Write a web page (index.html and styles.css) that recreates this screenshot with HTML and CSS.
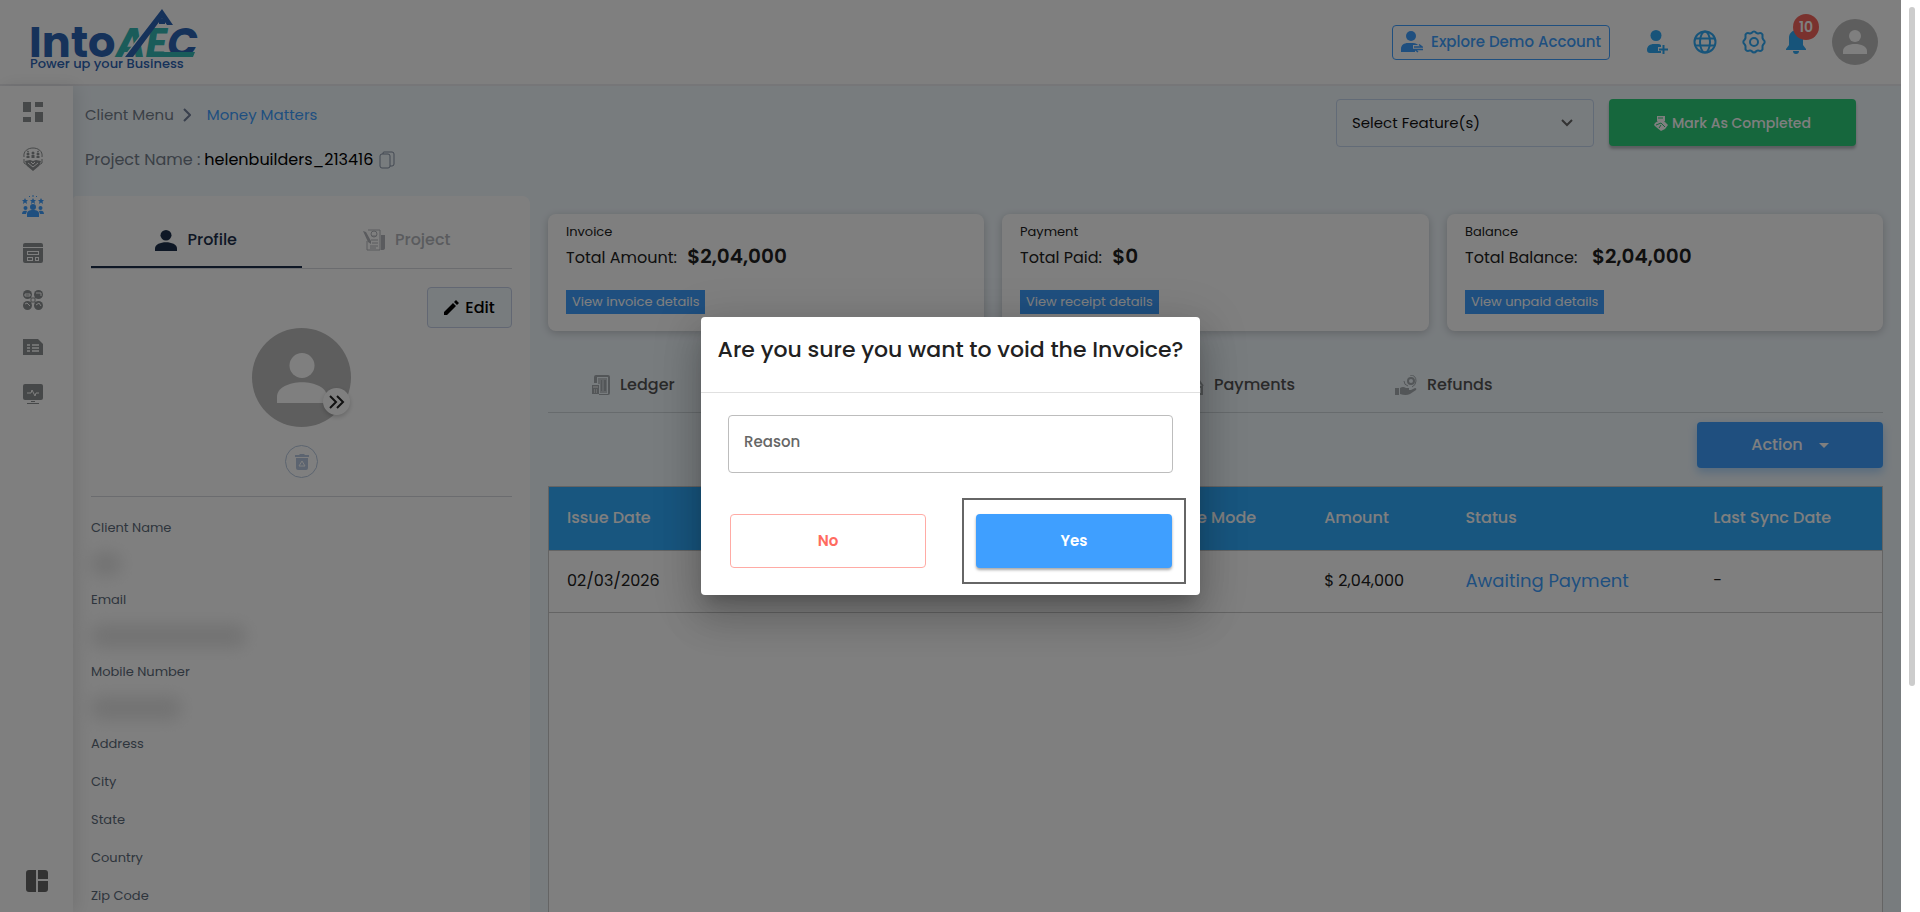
FILE: index.html
```html
<!DOCTYPE html>
<html lang="en">
<head>
<meta charset="utf-8">
<meta name="viewport" content="width=device-width, initial-scale=1">
<title>IntoAEC - Money Matters</title>
<link rel="stylesheet" href="styles.css">
</head>
<body>
<svg width="0" height="0" class="sprite" aria-hidden="true">
  <symbol id="person" viewBox="0 0 24 24"><circle cx="12" cy="6" r="6"/><path d="M0 24v-3c0-4.500 6-7 12-7s12 2.500 12 7v3z"/></symbol>
</svg>
<div class="app">
  <div class="page">
    <header class="topbar">
      <a class="logo" href="#" aria-label="IntoAEC home">
        <svg width="172" height="66" viewBox="-2 0 172 66">
          <text class="logo-word" y="50"><tspan class="navy" x="-1" font-size="43">Into</tspan><tspan class="teal" font-size="40" font-style="italic" x="86">AE</tspan><tspan class="navy" font-size="40" font-style="italic">C</tspan></text>
          <path class="teal" d="M119 45h46l-2 5h-46z"/>
          <path d="M93 52 127 8" stroke="#fff" stroke-width="2"/>
          <path class="navy" d="M95 50 132 2l11 16h-6l-5-7-29 39z"/>
          <path class="navy" d="M129 13l3-2 3 2v4h-6z"/>
          <text class="navy tag" x="0" y="61" font-size="13">Power up your Business</text>
        </svg>
      </a>
      <div class="topbar-tools">
        <button class="demo" type="button">
          <svg width="22" height="22" viewBox="0 0 22 22"><circle cx="10" cy="5" r="5"/><path d="M0 21v-3c0-4 3-6 7-6h5c3 0 4 1 5 2h-5v4h2v3z"/><path d="M13 16h8l-3-2.500M22 18.500h-8l3 2.500" fill="none" stroke="currentColor" stroke-width="1.500"/></svg>
          Explore Demo Account
        </button>
        <button class="tool" type="button" aria-label="Add user"><svg width="22" height="24" viewBox="0 0 22 24"><circle cx="9" cy="5.500" r="5.500"/><path d="M3 23q-3 0-3-3c0-4 3-6 7-6h4q2 0 3 1v2h-3v4h3v2z"/><path d="M16.500 15v9M12 19.500h9" class="line-2"/></svg></button>
        <button class="tool" type="button" aria-label="Language"><svg width="24" height="24" viewBox="0 0 24 24"><g class="line-2"><circle cx="12" cy="12" r="10.500"/><ellipse cx="12" cy="12" rx="5" ry="10.500"/><path d="M2 8.500h20M2 15.500h20"/></g></svg></button>
        <button class="tool wide" type="button" aria-label="Settings"><svg width="24" height="24" viewBox="0 0 24 24"><g class="line-2"><path d="M9.500 3q2.500-3 5 0l1.500.6q3-1.600 4.500.9L20.500 8l.7 1.500q3 2.500 0 5l-.7 1.500v3.500q-1.500 2.500-4.500.9l-1.500.6q-2.500 3-5 0L8 20.400q-3 1.600-4.500-.9V16l-.7-1.500q-3-2.500 0-5L3.500 8V4.500Q5 2 8 3.600z" stroke-linejoin="round"/><circle cx="12" cy="12" r="4"/></g></svg></button>
        <button class="tool bell" type="button" aria-label="Notifications, 10 unread"><svg width="20" height="24" viewBox="0 0 20 24"><path d="M10 0c5 1 7 4 7 8v7l3 4v1H0v-1l3-4V8c0-4 2-7 7-8zM7 21h6a3 3 0 0 1-6 0z"/></svg><span class="badge">10</span></button>
        <button class="avatar" type="button" aria-label="Account"><svg width="24" height="24" aria-hidden="true"><use href="#person"/></svg></button>
      </div>
    </header>

    <div class="body">
      <nav class="rail" aria-label="Main">
        <a href="#" aria-label="Dashboard"><svg width="20" height="20" viewBox="0 0 20 20"><path d="M0 0h8v10H0zM12 0h8v5h-8zM0 15h8v5H0zM12 10h8v10h-8z"/></svg></a>
        <a href="#" aria-label="Partners"><svg width="20" height="24" viewBox="0 0 20 24"><g class="line-1"><path d="M1 10C0 4 5 1 10 1s10 3 9 9M4 4l2 1M16 4l-2 1M1 12v4l3 2M19 12v4l-3 2"/></g><circle cx="5" cy="7" r="1.500"/><circle cx="10" cy="6" r="1.500"/><circle cx="15" cy="7" r="1.500"/><path d="M3.500 11V9h3v2zM8.500 11V8h3v3zM13.500 11V9h3v2zM2 14l5-1 3 1 3-1 5 1-2 5-6 5-6-5z"/><path d="M5 16l5 4 5-4M8 15l2 2 2-2" stroke="#fff" fill="none"/></svg></a>
        <a href="#" class="active" aria-label="Clients"><svg width="22" height="22" viewBox="0 0 22 22"><circle cx="11" cy="12" r="3"/><path d="M5 22v-3c0-3 2-4 6-4s6 1 6 4v3z"/><circle cx="3.500" cy="13" r="2"/><circle cx="18.500" cy="13" r="2"/><path d="M0 19c0-3 2-4 5-3l-1 3zM22 19c0-3-2-4-5-3l1 3z"/><path d="M3 3l1 2h2L4.500 6.500 5 9 3 7.500 1 9l.5-2.500L0 5h2zM11 3l1 2h2l-1.500 1.500.5 2.500-2-1.500L9 9l.5-2.500L8 5h2zM19 3l1 2h2l-1.500 1.500.5 2.500-2-1.500L17 9l.5-2.500L16 5h2z"/><path d="M11 0v2M7 1l1 1M15 1l-1 1" class="line-1"/></svg></a>
        <a href="#" aria-label="Pages"><svg width="20" height="20" viewBox="0 0 20 20"><path fill-rule="evenodd" d="M2 0h16q2 0 2 2v2H0V2q0-2 2-2zM0 5h20v13q0 2-2 2H2q-2 0-2-2zM4 8v4h12V8zM4 14v4h6v-4zM12 14v4h4v-4z"/><path d="M5 9h10v2H5zM5 15h4v2H5zM13 15h2v2h-2z"/></svg></a>
        <a href="#" aria-label="Workflow"><svg width="20" height="20" viewBox="0 0 20 20"><circle cx="4.500" cy="4.500" r="4.500"/><circle cx="15.500" cy="4.500" r="4.500"/><circle cx="4.500" cy="15.500" r="4.500"/><circle cx="15.500" cy="15.500" r="4.500"/><path d="M2 6V4h5v2zM13 3h5v3M2 14l2-1 3 3M13 15l3-2 2 3" stroke="#fff" fill="none"/><path d="M8 8h4v4H8zM7 7l1 1M13 7l-1 1M7 13l1-1M13 13l-1-1" class="line-1"/></svg></a>
        <a href="#" aria-label="Reports"><svg width="20" height="16" viewBox="0 0 20 16"><path d="M0 0h15l5 5v11H0z"/><path d="M4 6h3M9 6h7M4 9h3M9 9h7M4 12h3M9 12h7" stroke="#fff" stroke-width="1.500"/></svg></a>
        <a href="#" aria-label="Activity"><svg width="20" height="20" viewBox="0 0 20 20"><rect width="20" height="16" rx="2"/><path d="M8 17h4v1H8zM4 19h12v1H4z"/><path d="M4 9h4l1-3 3 6 1-3h3" stroke="#fff" fill="none"/></svg></a>
        <button class="rail-toggle" type="button" aria-label="Toggle layout"><svg width="22" height="22" viewBox="0 0 22 22"><path d="M3 0h7v22H3q-3 0-3-3V3q0-3 3-3zM12 0h7q3 0 3 3v6H12zM12 11h10v8q0 3-3 3h-7z"/></svg></button>
      </nav>

      <main class="content">
        <div class="heading">
          <div>
            <nav class="crumbs" aria-label="Breadcrumb">
              <a href="#" class="muted">Client Menu</a>
              <svg width="8" height="14" viewBox="0 0 8 14"><path d="M1 1l6 6-6 6" fill="none" stroke="#72809a" stroke-width="2"/></svg>
              <a href="#" class="current">Money Matters</a>
            </nav>
            <p class="project"><span class="muted">Project Name :</span> helenbuilders_213416
              <button class="plain" type="button" aria-label="Copy project name"><svg width="16" height="18" viewBox="0 0 16 18"><g fill="none" stroke="#8490a4"><rect x="1" y="3" width="10" height="14" rx="2"/><path d="M4 3V2q0-1 1-1h8q2 0 2 2v10q0 2-2 2h-2"/></g></svg></button>
            </p>
          </div>
          <div class="heading-tools">
            <select aria-label="Select features"><option>Select Feature(s)</option></select>
            <button class="complete" type="button"><svg width="14" height="16" viewBox="0 0 14 16"><path d="M3 1h8v5H3zM1 8l3-2h6l4 4-3 4-4 2-5-4-2-2z"/><path d="M4 3h5M2 10l5-2 4 4M5 13l2-3" stroke="#2dce7a" fill="none"/></svg>Mark As Completed</button>
          </div>
        </div>

        <div class="columns">
          <section class="profile">
            <div class="tabs" role="tablist">
              <button type="button" role="tab" aria-selected="true"><svg width="22" height="21" viewBox="0 0 24 24" preserveAspectRatio="none"><use href="#person"/></svg>Profile</button>
              <button type="button" role="tab" aria-selected="false"><svg width="22" height="22" viewBox="0 0 22 22"><path d="M5 1h12v20H4v-9" fill="none" stroke="currentColor"/><path d="M18 6h4v13q0 2-3 2h-1zM0 2l3 1 5 9v3l-3-2z"/><circle cx="11" cy="5" r="3" fill="none" stroke="currentColor"/><path d="M9 7h4M8 11h7M9 14h6M7 17h8M7 19h6" stroke="currentColor"/></svg>Project</button>
            </div>
            <button class="edit" type="button"><svg width="15" height="15" viewBox="0 0 15 15"><path d="M0 15v-3l9-9 3 3-9 9zM10 2l2-2 3 3-2 2z"/></svg>Edit</button>
            <div class="photo">
              <svg width="50" height="50" aria-hidden="true"><use href="#person"/></svg>
              <button class="photo-more" type="button" aria-label="More"><svg width="16" height="14" viewBox="0 0 16 14"><path d="M1 1l6 6-6 6M8 1l6 6-6 6" fill="none" stroke="#222" stroke-width="2"/></svg></button>
            </div>
            <button class="trash" type="button" aria-label="Delete photo"><svg width="14" height="16" viewBox="0 0 14 16"><path d="M0 1h4l1-1h4l1 1h4v2H0zM1 4h12v10q0 2-2 2H3q-2 0-2-2z"/><path d="M7 7l3 5H4z" fill="none" stroke="#fff"/></svg></button>
            <dl>
              <dt>Client Name</dt><dd class="short"></dd>
              <dt>Email</dt><dd class="long"></dd>
              <dt>Mobile Number</dt><dd class="medium"></dd>
              <dt>Address</dt><dt>City</dt><dt>State</dt><dt>Country</dt><dt>Zip Code</dt>
            </dl>
          </section>

          <section class="finance">
            <div class="cards">
              <article><h2>Invoice</h2><p>Total Amount: <strong>$2,04,000</strong></p><a href="#">View invoice details</a></article>
              <article><h2>Payment</h2><p>Total Paid: <strong>$0</strong></p><a href="#">View receipt details</a></article>
              <article><h2>Balance</h2><p>Total Balance:&nbsp; <strong>$2,04,000</strong></p><a href="#">View unpaid details</a></article>
            </div>
            <div class="ledger-tabs" role="tablist">
              <button type="button" role="tab"><svg width="18" height="20" viewBox="0 0 18 20"><path fill-rule="evenodd" d="M4 0h12q2 0 2 2v16q0 2-2 2H7v-1h9V2H5v6H2V2q0-2 2-2z"/><path d="M6 3h9v15H8V9H6z" opacity=".6"/><path d="M9 5h1v11H9zM12 5h2v11h-2zM0 10h7v9H0z"/><path d="M1 12h5M2 15h1M4 15h1M2 17h1M4 17h1" stroke="#fff"/></svg>Ledger</button>
              <button type="button" role="tab"><svg width="20" height="20" viewBox="0 0 20 20"><path d="M10 2q4 0 6 5l3 4M2 12h16v7H2z" fill="none" stroke="currentColor" stroke-width="2"/></svg>Payments</button>
              <button type="button" role="tab"><svg width="22" height="20" viewBox="0 0 22 20"><circle cx="16" cy="6" r="3" fill="none" stroke="currentColor" stroke-width="2"/><path d="M15 0q6 0 6 6 0 4-4 6M13 11q-4-1-4-5" fill="none" stroke="currentColor"/><path d="M0 13h4v7H0zM5 13q3-2 6 0h3v2h2l4-2q2 0 1 2l-6 4q-4 2-10 0z"/></svg>Refunds</button>
            </div>
            <button class="action" type="button">Action<svg width="10" height="5" viewBox="0 0 10 5"><path d="M0 0h10L5 5z"/></svg></button>
            <div class="table-wrap">
              <table>
                <colgroup><col class="c-date"><col class="c-mode"><col class="c-amount"><col class="c-status"><col class="c-sync"></colgroup>
                <thead><tr><th>Issue Date</th><th class="end">Invoice Mode</th><th>Amount</th><th>Status</th><th>Last Sync Date</th></tr></thead>
                <tbody><tr><td>02/03/2026</td><td></td><td>$ 2,04,000</td><td class="status"><a href="#">Awaiting Payment</a></td><td>-</td></tr></tbody>
              </table>
            </div>
          </section>
        </div>
      </main>
    </div>

    <div class="overlay">
      <form class="dialog" role="dialog" aria-modal="true" aria-labelledby="dialog-title">
        <h1 id="dialog-title">Are you sure you want to void the Invoice?</h1>
        <div class="dialog-body">
          <div class="field"><label for="reason">Reason</label><input id="reason" type="text"></div>
          <div class="choices">
            <button class="no" type="button">No</button>
            <div class="focus-frame"><button class="yes" type="button">Yes</button></div>
          </div>
        </div>
      </form>
    </div>
  </div>
  <div class="scrollbar"><div class="thumb"></div></div>
</div>
</body>
</html>
```
FILE: styles.css
```css
* { box-sizing: border-box; }
body, h1, h2, p, dl, dd { margin: 0; }
body {
  font: 16px/24px Poppins, Inter, "Open Sans", sans-serif;
  color: #212121;
  overflow: hidden;
}
button, input, select { font: inherit; color: inherit; }
button { border: 0; background: none; padding: 0; cursor: pointer; }
a { color: inherit; text-decoration: none; }
svg { fill: currentColor; flex: none; display: block; }
.sprite { position: absolute; }
.line-1 { fill: none; stroke: currentColor; stroke-width: 1; }
.line-2 { fill: none; stroke: currentColor; stroke-width: 2; }

.app { display: flex; height: 100vh; }
.page { position: relative; flex: 1; min-width: 0; display: flex; flex-direction: column; background: #fff; overflow: hidden; }
.scrollbar { width: 19px; padding: 7px 5px 0 8px; background: #fff; }
.thumb { height: 75%; border-radius: 4px; background: #ccc; }

.topbar {
  flex: none; height: 86px; padding: 0 23px 0 28px;
  display: flex; align-items: center; justify-content: space-between;
  border-bottom: 2px solid #ececf0;
}
.logo { align-self: flex-start; padding-top: 7px; }
.logo-word { font-weight: 700; }
.tag { font-weight: 500; }
.navy { fill: #2d64b4; }
.teal { fill: #35b8b4; }
.topbar-tools { display: flex; align-items: center; color: #2fa9f4; }
.demo {
  display: flex; align-items: center; gap: 8px;
  height: 35px; padding: 0 8px; margin-right: 37px;
  border: 1px solid #3f9fff; border-radius: 4px;
  color: #3f9fff; font-size: 15px; font-weight: 500;
}
.tool { position: relative; margin-right: 24px; }
.tool.wide { margin: 0 20px 0 1px; }
.tool.bell { margin-right: 26px; }
.badge {
  position: absolute; left: 7px; top: -16px;
  width: 26px; height: 26px; border-radius: 50%;
  background: #f4655c; color: #fff;
  font-size: 14px; font-weight: 600; line-height: 26px; text-align: center;
}
.avatar { width: 46px; height: 46px; border-radius: 50%; background: #bdbdbd; color: #fff; display: grid; place-items: center; }

.body { flex: 1; min-height: 0; display: flex; }
.rail {
  flex: none; width: 73px; padding: 2px 8px 20px 0; z-index: 1;
  display: flex; flex-direction: column; align-items: center;
  background: #fff; color: #8d9192; box-shadow: 4px 0 16px rgba(0, 0, 0, .1);
}
.rail a { display: grid; place-items: center; width: 28px; height: 47px; }
.rail .active { color: #3f9fff; }
.rail-toggle { margin: auto 0 0 8px; color: #666; }

.content { flex: 1; min-width: 0; display: flex; flex-direction: column; background: #f1f8fd; }
.heading { display: flex; justify-content: space-between; padding: 13px 45px 0 12px; height: 110px; }
.crumbs { display: flex; align-items: center; gap: 9px; height: 32px; font-size: 15px; }
.current { color: #3f9fff; margin-left: 7px; }
.muted { color: #75808c; }
.project { display: flex; align-items: center; gap: 4px; height: 24px; margin-top: 17px; color: #000; font-size: 16px; }
.plain { margin-left: 2px; }
.heading-tools { display: flex; gap: 15px; }
.heading-tools select {
  width: 258px; height: 48px; padding: 0 15px; appearance: none;
  border: 1px solid #c5d6ee; border-radius: 4px; font-size: 15px; color: #111;
  background: url("data:image/svg+xml,%3Csvg xmlns='http://www.w3.org/2000/svg' width='12' height='8'%3E%3Cpath d='M1 1l5 5 5-5' fill='none' stroke='%23666' stroke-width='2'/%3E%3C/svg%3E") no-repeat right 20px center;
}
.complete {
  width: 247px; height: 47px; display: flex; align-items: center; justify-content: center; gap: 4px;
  border-radius: 4px; background: #2dce7a; color: #fff; font-size: 14px; font-weight: 500;
  box-shadow: 0 3px 3px rgba(0, 0, 0, .25);
}

.columns { flex: 1; min-height: 0; display: flex; gap: 18px; padding-right: 18px; }
.profile {
  flex: none; width: 457px; padding: 18px; overflow: hidden;
  display: flex; flex-direction: column; align-items: center;
  background: #fff; border-radius: 4px 8px 0 0;
}
.profile > * { flex: none; }
.tabs { align-self: stretch; display: grid; grid-template-columns: 1fr 1fr; border-bottom: 1px solid #d6d9de; }
.tabs button {
  display: flex; align-items: center; justify-content: center; gap: 10px;
  height: 54px; font-weight: 500; color: #b4b7bc; border-bottom: 2px solid transparent;
}
.tabs [aria-selected="true"] { color: #1c2f4a; border-color: #1c2f4a; }
.edit {
  align-self: flex-end; width: 85px; height: 41px; margin-top: 18px;
  display: flex; align-items: center; justify-content: center; gap: 6px;
  border: 1px solid #c5cfe6; border-radius: 4px; background: #f1f8fd; color: #000; font-weight: 500;
}
.photo { position: relative; width: 99px; height: 99px; border-radius: 50%; background: #bdbdbd; color: #fff; display: grid; place-items: center; }
.photo-more {
  position: absolute; right: 1px; bottom: 12px; width: 27px; height: 27px;
  display: grid; place-items: center; border-radius: 50%; background: #fff; box-shadow: 0 2px 5px rgba(0, 0, 0, .2);
}
.trash { width: 33px; height: 33px; margin-top: 18px; display: grid; place-items: center; border: 1px solid #b8c9e0; border-radius: 50%; color: #b8c9e0; }
dl { align-self: stretch; margin-top: 18px; padding-top: 21px; border-top: 1px solid #d6d9de; font-size: 13px; line-height: 20px; color: #5d6b7a; }
dt { margin-bottom: 18px; }
dd { height: 24px; margin: -4px 0 14px; border-radius: 8px; background: #e6e6e6; filter: blur(8px); }
.short { width: 30px; }
.long { width: 155px; }
.medium { width: 90px; }

.finance { flex: 1; min-width: 0; display: flex; flex-direction: column; padding-top: 18px; }
.cards { display: grid; grid-template-columns: 436fr 427fr 436fr; gap: 18px; }
.cards article { height: 117px; padding: 8px 18px; border-radius: 8px; background: #fff; box-shadow: 0 2px 8px rgba(0, 0, 0, .2); }
.cards h2 { font-size: 13px; line-height: 20px; font-weight: 400; }
.cards p { margin: 1px 0 18px; line-height: 26px; }
.cards strong { margin-left: 6px; font-size: 20px; font-weight: 600; }
.cards a { display: inline-block; padding: 0 6px; background: #3f9fff; color: #fff; font-size: 13px; line-height: 24px; }
.ledger-tabs { display: grid; grid-template-columns: 592px 211px auto; justify-content: start; align-items: center; height: 82px; padding: 26px 0 0 44px; border-bottom: 1px solid #cfd6da; color: #555; }
.ledger-tabs button { display: flex; align-items: center; gap: 10px; font-weight: 500; }
.ledger-tabs svg { color: #a6acb0; }
.action {
  align-self: flex-end; width: 186px; height: 46px; margin: 9px 0 18px;
  display: flex; flex: none; align-items: center; justify-content: center; gap: 16px;
  border-radius: 4px; background: #3f9fff; color: #fff; font-weight: 500; box-shadow: 0 4px 10px rgba(63, 159, 255, .4);
}
.table-wrap { flex: 1; border: 1px solid #c8c8c8; border-bottom: 0; background: #fff; }
table { width: 100%; table-layout: fixed; border-collapse: collapse; }
.c-date { width: 21%; }
.c-mode { width: 35.8%; }
.c-amount { width: 10.6%; }
.c-status { width: 18.6%; }
th, td { padding: 0 18px; text-align: left; border-bottom: 1px solid #c8c8c8; }
th { height: 63px; background: #31acff; color: #fff; font-weight: 500; }
td { height: 62px; }
th.end { text-align: right; padding-right: 50px; }
.status { color: #3f9fff; font-size: 18px; }

.overlay { position: absolute; inset: 0; z-index: 5; display: grid; place-items: center; background: rgba(0, 0, 0, .5); }
.dialog {
  width: 499px; border-radius: 4px; background: #fff;
  box-shadow: 0 11px 15px -7px rgba(0, 0, 0, .2), 0 24px 38px 3px rgba(0, 0, 0, .14), 0 9px 46px 8px rgba(0, 0, 0, .12);
}
.dialog h1 { padding: 16px 0 25px; border-bottom: 1px solid #e0e0e0; font-size: 22px; line-height: 34px; font-weight: 500; text-align: center; white-space: nowrap; }
.dialog-body { padding: 22px 14px 11px 27px; }
.field { display: flex; align-items: center; gap: 8px; height: 58px; margin-right: 13px; padding: 0 15px 4px; border: 1px solid #bdbdbd; border-radius: 4px; }
.field label { color: #666; font-size: 15px; font-weight: 500; }
.field input { flex: 1; min-width: 0; border: 0; outline: 0; background: none; }
.choices { display: flex; justify-content: space-between; align-items: center; margin-top: 25px; padding-left: 2px; }
.choices button { width: 196px; height: 54px; border-radius: 4px; font-weight: 600; font-size: 15px; }
.choices .no { border: 1px solid #ffaba5; color: #ff6b60; }
.yes { background: #3f9fff; color: #fff; box-shadow: 0 2px 3px rgba(0, 0, 0, .35); }
.focus-frame { padding: 14px 12px; border: 2px solid #666; }
```
